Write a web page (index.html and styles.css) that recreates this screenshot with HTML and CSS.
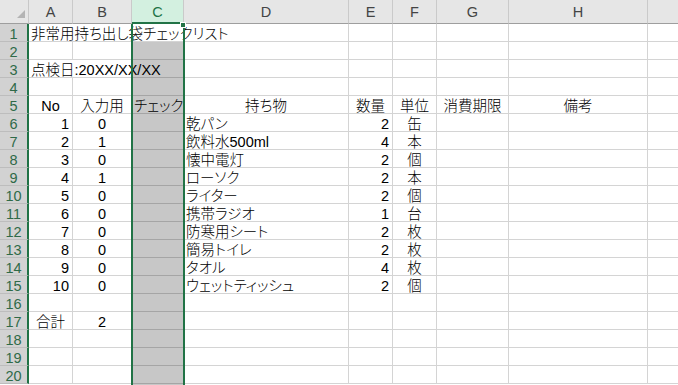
FILE: index.html
```html
<!DOCTYPE html>
<html lang="ja">
<head>
    <meta charset="UTF-8">
    <meta name="viewport" content="width=device-width, initial-scale=1.0">
    <title>非常用持ち出し袋チェックリスト</title>
    <link rel="stylesheet" href="styles.css">
</head>
<body>
    <div class="sheet">
        <!-- column headers -->
        <div class="corner">
            <svg width="8" height="8" viewBox="0 0 8 8"><polygon points="8,0 8,8 0,8" fill="#b4b4b4"/></svg>
        </div>
        <div class="col-hd">A</div>
        <div class="col-hd">B</div>
        <div class="col-hd selected">C</div>
        <div class="col-hd">D</div>
        <div class="col-hd">E</div>
        <div class="col-hd">F</div>
        <div class="col-hd">G</div>
        <div class="col-hd">H</div>
        <div class="col-hd last"></div>

        <div class="row"><div class="row-hd">1</div><div class="cell span-4">非常用持ち出し袋チェックリスト</div><div class="cell"></div><div class="cell"></div><div class="cell"></div><div class="cell"></div><div class="cell last"></div></div>
        <div class="row"><div class="row-hd">2</div><div class="cell"></div><div class="cell"></div><div class="cell"></div><div class="cell"></div><div class="cell"></div><div class="cell"></div><div class="cell"></div><div class="cell"></div><div class="cell last"></div></div>
        <div class="row"><div class="row-hd">3</div><div class="cell span-3">点検日:20XX/XX/XX</div><div class="cell"></div><div class="cell"></div><div class="cell"></div><div class="cell"></div><div class="cell"></div><div class="cell last"></div></div>
        <div class="row"><div class="row-hd">4</div><div class="cell"></div><div class="cell"></div><div class="cell"></div><div class="cell"></div><div class="cell"></div><div class="cell"></div><div class="cell"></div><div class="cell"></div><div class="cell last"></div></div>
        <div class="row"><div class="row-hd">5</div><div class="cell c">No</div><div class="cell c">入力用</div><div class="cell c">チェック</div><div class="cell c">持ち物</div><div class="cell c">数量</div><div class="cell c">単位</div><div class="cell c">消費期限</div><div class="cell c">備考</div><div class="cell last"></div></div>

        <div class="row"><div class="row-hd">6</div><div class="cell r">1</div><div class="cell c">0</div><div class="cell"></div><div class="cell">乾パン</div><div class="cell r">2</div><div class="cell c">缶</div><div class="cell"></div><div class="cell"></div><div class="cell last"></div></div>
        <div class="row"><div class="row-hd">7</div><div class="cell r">2</div><div class="cell c">1</div><div class="cell"></div><div class="cell">飲料水500ml</div><div class="cell r">4</div><div class="cell c">本</div><div class="cell"></div><div class="cell"></div><div class="cell last"></div></div>
        <div class="row"><div class="row-hd">8</div><div class="cell r">3</div><div class="cell c">0</div><div class="cell"></div><div class="cell">懐中電灯</div><div class="cell r">2</div><div class="cell c">個</div><div class="cell"></div><div class="cell"></div><div class="cell last"></div></div>
        <div class="row"><div class="row-hd">9</div><div class="cell r">4</div><div class="cell c">1</div><div class="cell"></div><div class="cell">ローソク</div><div class="cell r">2</div><div class="cell c">本</div><div class="cell"></div><div class="cell"></div><div class="cell last"></div></div>
        <div class="row"><div class="row-hd">10</div><div class="cell r">5</div><div class="cell c">0</div><div class="cell"></div><div class="cell">ライター</div><div class="cell r">2</div><div class="cell c">個</div><div class="cell"></div><div class="cell"></div><div class="cell last"></div></div>
        <div class="row"><div class="row-hd">11</div><div class="cell r">6</div><div class="cell c">0</div><div class="cell"></div><div class="cell">携帯ラジオ</div><div class="cell r">1</div><div class="cell c">台</div><div class="cell"></div><div class="cell"></div><div class="cell last"></div></div>
        <div class="row"><div class="row-hd">12</div><div class="cell r">7</div><div class="cell c">0</div><div class="cell"></div><div class="cell">防寒用シート</div><div class="cell r">2</div><div class="cell c">枚</div><div class="cell"></div><div class="cell"></div><div class="cell last"></div></div>
        <div class="row"><div class="row-hd">13</div><div class="cell r">8</div><div class="cell c">0</div><div class="cell"></div><div class="cell">簡易トイレ</div><div class="cell r">2</div><div class="cell c">枚</div><div class="cell"></div><div class="cell"></div><div class="cell last"></div></div>
        <div class="row"><div class="row-hd">14</div><div class="cell r">9</div><div class="cell c">0</div><div class="cell"></div><div class="cell">タオル</div><div class="cell r">4</div><div class="cell c">枚</div><div class="cell"></div><div class="cell"></div><div class="cell last"></div></div>
        <div class="row"><div class="row-hd">15</div><div class="cell r">10</div><div class="cell c">0</div><div class="cell"></div><div class="cell">ウェットティッシュ</div><div class="cell r">2</div><div class="cell c">個</div><div class="cell"></div><div class="cell"></div><div class="cell last"></div></div>

        <div class="row"><div class="row-hd">16</div><div class="cell"></div><div class="cell"></div><div class="cell"></div><div class="cell"></div><div class="cell"></div><div class="cell"></div><div class="cell"></div><div class="cell"></div><div class="cell last"></div></div>
        <div class="row"><div class="row-hd">17</div><div class="cell c">合計</div><div class="cell c">2</div><div class="cell"></div><div class="cell"></div><div class="cell"></div><div class="cell"></div><div class="cell"></div><div class="cell"></div><div class="cell last"></div></div>
        <div class="row"><div class="row-hd">18</div><div class="cell"></div><div class="cell"></div><div class="cell"></div><div class="cell"></div><div class="cell"></div><div class="cell"></div><div class="cell"></div><div class="cell"></div><div class="cell last"></div></div>
        <div class="row"><div class="row-hd">19</div><div class="cell"></div><div class="cell"></div><div class="cell"></div><div class="cell"></div><div class="cell"></div><div class="cell"></div><div class="cell"></div><div class="cell"></div><div class="cell last"></div></div>
        <div class="row"><div class="row-hd">20</div><div class="cell"></div><div class="cell"></div><div class="cell"></div><div class="cell"></div><div class="cell"></div><div class="cell"></div><div class="cell"></div><div class="cell"></div><div class="cell last"></div></div>

        <!-- selected column C (overlay) -->
        <div class="selection">
            <span class="fill-handle"></span>
            <div class="selection-dim"></div>
        </div>
    </div>
</body>
</html>
```

FILE: styles.css
```css
* {
    margin: 0;
    padding: 0;
    box-sizing: border-box;
}

body {
    background: #fff;
    font-family: "Liberation Sans", "Noto Sans CJK JP", sans-serif;
    font-size: 14.5px;
    font-weight: 300;
    color: #000;
    overflow: hidden;
}

.sheet {
    position: relative;
    display: grid;
    grid-template-columns: 29px 44px 59px 52px 165px 44px 44px 72px 139px 1fr;
    grid-template-rows: 24px repeat(20, 18px);
    width: 678px;
    height: 385px;
    overflow: hidden;
}

.row {
    display: contents;
}

/* headers */
.corner {
    background: #e6e6e6;
    border-right: 1px solid #c8c8c8;
    border-bottom: 1px solid #9e9e9e;
    display: flex;
    align-items: flex-end;
    justify-content: flex-end;
    padding: 0 3px 5px 0;
}

.corner svg {
    display: block;
}

.col-hd {
    background: #e6e6e6;
    border-right: 1px solid #cacaca;
    border-bottom: 1px solid #9e9e9e;
    text-align: center;
    padding-top: 2px;
    line-height: 20px;
    color: #444;
}

.col-hd.selected {
    background: #d3f0e0;
    color: #217346;
    border-bottom: 2px solid #217346;
}

.col-hd.last {
    border-right: none;
}

.row-hd {
    background: #d2d2d2;
    border-right: 2px solid #217346;
    border-bottom: 1px solid #bdbdbd;
    text-align: center;
    padding-top: 3px;
    line-height: 14px;
    color: #2f6a48;
}

/* cells */
.cell {
    border-right: 1px solid #d4d4d4;
    border-bottom: 1px solid #d4d4d4;
    padding: 3px 2px 0;
    line-height: 14px;
    white-space: nowrap;
    font-feature-settings: "palt";
}

.cell.r {
    text-align: right;
    padding-right: 3px;
}

.cell.c {
    text-align: center;
}

.cell.last {
    border-right: none;
}

.span-4 {
    grid-column: span 4;
}

.span-3 {
    grid-column: span 3;
}

/* selection */
.selection {
    position: absolute;
    left: 131px;
    top: 24px;
    width: 54px;
    bottom: 0;
    border-left: 2px solid #217346;
    border-right: 2px solid #217346;
}

.selection-dim {
    margin-top: 18px;
    height: 100%;
    background: rgba(0, 0, 0, 0.22);
}

.fill-handle {
    position: absolute;
    top: -2px;
    right: -3px;
    width: 6px;
    height: 6px;
    background: #217346;
    border: 1px solid #fff;
}
```
